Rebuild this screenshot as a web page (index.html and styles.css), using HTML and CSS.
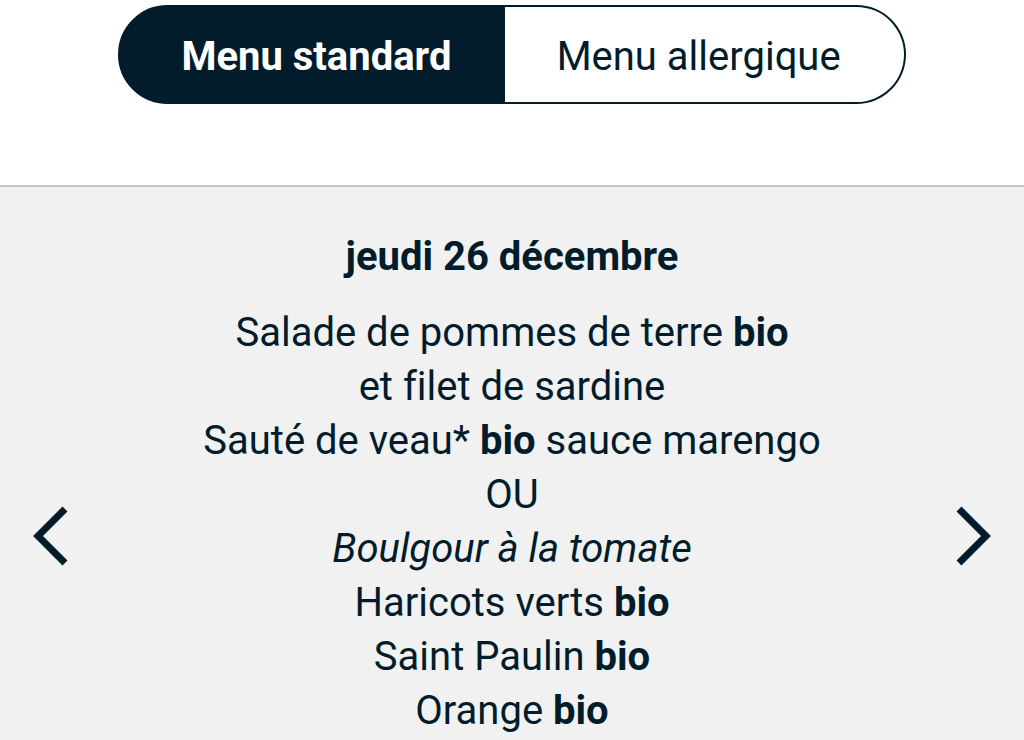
FILE: index.html
```html
<!DOCTYPE html>
<html lang="fr">
<head>
  <meta charset="UTF-8">
  <meta name="viewport" content="width=device-width, initial-scale=1.0">
  <title>Menu</title>
  <link rel="stylesheet" href="styles.css">
</head>
<body>
  <header class="header">
    <div class="tabs">
      <button type="button" class="tab active" aria-pressed="true">Menu standard</button>
      <button type="button" class="tab" aria-pressed="false">Menu allergique</button>
    </div>
  </header>

  <main class="day">
    <button type="button" class="arrow" aria-label="Jour précédent">
      <svg width="36" height="60" viewBox="0 0 36 60"><path d="M33 3L6 30L33 57"/></svg>
    </button>
    <div class="menu">
      <h1 class="date">jeudi 26 décembre</h1>
      <p class="dishes">
        Salade de pommes de terre <b>bio</b><br>
        et filet de sardine<br>
        Sauté de veau* <b>bio</b> sauce marengo<br>
        OU<br>
        <i>Boulgour à la tomate</i><br>
        Haricots verts <b>bio</b><br>
        Saint Paulin <b>bio</b><br>
        Orange <b>bio</b>
      </p>
    </div>
    <button type="button" class="arrow" aria-label="Jour suivant">
      <svg width="36" height="60" viewBox="0 0 36 60"><path d="M3 3L30 30L3 57"/></svg>
    </button>
  </main>
</body>
</html>
```

FILE: styles.css
```css
body {
  font-family: Roboto, sans-serif;
  font-size: 40px;
  font-variant-ligatures: none;
  color: #021c2b;
  background-color: #f1f1f1;
  margin: 0;
}

.header {
  background-color: #fff;
  border-bottom: 2px solid #c4c4c4;
  padding: 5px 0 81px;
}

.tabs {
  display: flex;
  width: 77%;
  margin: 0 auto;
}

.tab {
  flex: 1 1 auto;
  border: 2px solid #021c2b;
  border-left: none;
  border-radius: 0 50px 50px 0;
  padding: 26px 62px 22px 50px;
  background-color: #fff;
  color: #021c2b;
  font-family: inherit;
  font-size: 40px;
  line-height: 47px;
  cursor: pointer;
}

.tab.active {
  border: 2px solid #021c2b;
  border-radius: 50px 0 0 50px;
  padding: 26px 50px 22px 60px;
  background-color: #021c2b;
  color: #fff;
  font-weight: bold;
}

.day {
  display: flex;
  justify-content: space-between;
  padding: 43px 32px 0;
}

.menu {
  text-align: center;
}

.date {
  margin: 0 0 22px;
  font-size: 40px;
  line-height: 54px;
}

.dishes {
  margin: 0;
  line-height: 54px;
}

.arrow {
  align-self: center;
  border: none;
  padding: 104px 0 0;
  background: none;
  cursor: pointer;
}

.arrow svg {
  display: block;
  fill: none;
  stroke: #021c2b;
  stroke-width: 7;
}
```
